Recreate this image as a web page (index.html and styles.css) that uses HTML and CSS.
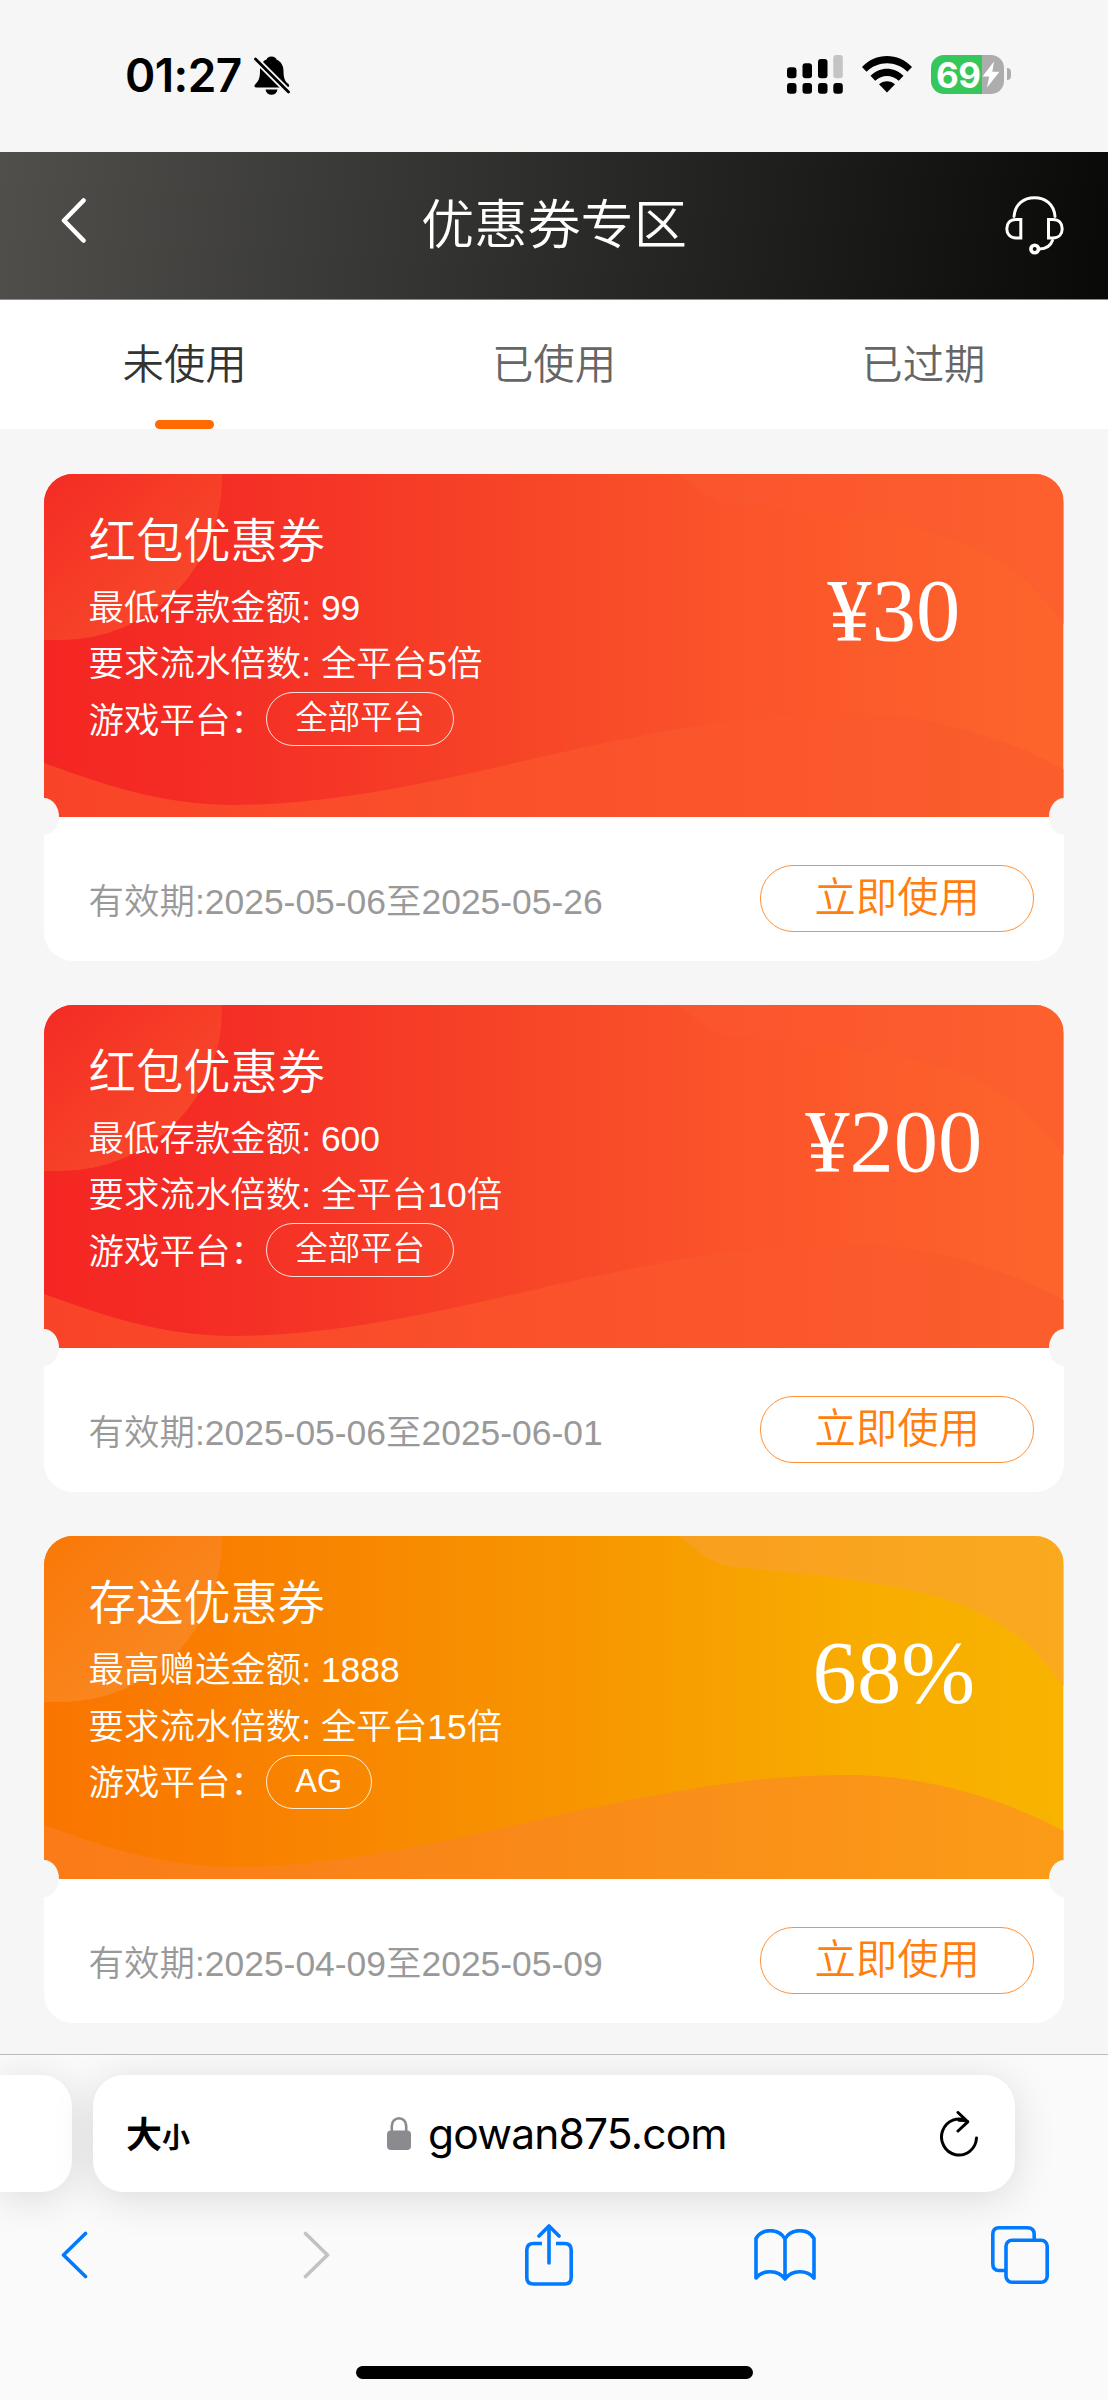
FILE: index.html
```html
<!DOCTYPE html>
<html lang="zh-CN">
<head>
<meta charset="utf-8">
<title>优惠券专区</title>
<link rel="stylesheet" href="styles.css">
</head>
<body>
<svg class="defs" width="0" height="0" aria-hidden="true">
  <defs>
    <linearGradient id="redBase"><stop offset="0" stop-color="#f42623"/><stop offset=".15" stop-color="#f42c25"/><stop offset=".5" stop-color="#f74728"/><stop offset=".68" stop-color="#fb542a"/><stop offset="1" stop-color="#fd652c"/></linearGradient>
    <linearGradient id="redWave"><stop offset="0" stop-color="#f94328"/><stop offset=".5" stop-color="#fa522b"/><stop offset="1" stop-color="#fb5e2c"/></linearGradient>
    <linearGradient id="redTop"><stop offset="0" stop-color="#fa542d"/><stop offset="1" stop-color="#fd602d"/></linearGradient>
    <linearGradient id="redOrb" x1="0" y1="0" x2="1" y2="1"><stop offset="0" stop-color="#f42b24"/><stop offset=".45" stop-color="#f63d27"/><stop offset=".8" stop-color="#f8492b"/></linearGradient>
    <linearGradient id="amberBase"><stop offset="0" stop-color="#fa7500"/><stop offset=".15" stop-color="#f97d00"/><stop offset=".5" stop-color="#f79400"/><stop offset=".8" stop-color="#f8ac00"/><stop offset="1" stop-color="#f8b400"/></linearGradient>
    <linearGradient id="amberWave"><stop offset="0" stop-color="#fa7b18"/><stop offset=".5" stop-color="#f98a18"/><stop offset="1" stop-color="#fb9c18"/></linearGradient>
    <linearGradient id="amberTop"><stop offset="0" stop-color="#f99f1f"/><stop offset="1" stop-color="#faaa1f"/></linearGradient>
    <linearGradient id="amberOrb" x1="0" y1="0" x2="1" y2="1"><stop offset="0" stop-color="#f97806"/><stop offset=".45" stop-color="#f98218"/><stop offset=".8" stop-color="#f98922"/></linearGradient>
    <path id="wave" d="M0 289C60 311 120 331 189 331C290 331 400 306 510 280C620 256 710 239 803 239C880 239 960 262 1020 295V343H0Z"/>
    <path id="crest" d="M635 0C655 16 668 27 684 30C724 35 770 37 814 45C850 50 880 56 910 66C960 84 988 107 1020 150V0Z"/>
    <path id="orb" d="M0 0H178A161 161 0 0 1 17 166H0Z"/>
  </defs>
</svg>

<header class="status">
  <span class="status-time">01:27</span>
  <svg class="status-bell" viewBox="0 0 36 39">
    <path d="M17.5 0.5C14.5 .5 13 2 12.6 3.4C7.400 5.400 6 10 6 15C6 23 4 25.500 1.500 28C0 29.500 0 31.400 2 31.400H33C35 31.400 36 29.500 34.400 28C31 25.500 29.500 22 29.500 15C29.500 9 26.500 5 22.500 3.400C22 2 20.500 .5 17.500 .5ZM11.500 33.500H23.500C23 37 20.500 38.700 17.500 38.700S12 37 11.500 33.500Z"/>
    <path d="M-1 0.500L34.500 36" stroke="#f6f6f6" stroke-width="6.500"/>
    <path d="M1.500 3L34.500 36" stroke="#000" stroke-width="2.800" stroke-linecap="round"/>
  </svg>
  <div class="status-right">
    <svg class="status-signal" viewBox="0 0 56 39">
      <rect x="0" y="12.300" width="9.500" height="11" rx="3"/><rect x="15.500" y="8.300" width="9.500" height="15" rx="3"/><rect x="31" y="4" width="9.500" height="19.300" rx="3"/><rect x="46.300" y="0" width="9.500" height="23.300" rx="3" fill="#c4c4c4"/>
      <rect x="0" y="28" width="9.500" height="10.800" rx="3"/><rect x="15.500" y="28" width="9.500" height="10.800" rx="3"/><rect x="31" y="28" width="9.500" height="10.800" rx="3"/><rect x="46.300" y="28" width="9.500" height="10.800" rx="3"/>
    </svg>
    <svg class="status-wifi" viewBox="0 0 50 37">
      <path d="M0 11C13.500-3.600 36.500-3.600 50 11L45.400 15.800C34.300 4.300 15.700 4.300 4.600 15.800Z"/>
      <path d="M8.500 19.800C18 10.300 32 10.300 41.500 19.800L36.800 24.700C30 18.300 20 18.300 13.200 24.700Z"/>
      <path d="M17 28.300C21.500 24.300 28.500 24.300 33 28.300L25 36.500Z"/>
    </svg>
    <div class="battery"><span class="battery-num">69</span>
      <svg class="battery-bolt" viewBox="0 0 18 27"><path d="M12 .5L.5 15.500H7.200L5 26.500L17.500 10.800H10.300Z"/></svg>
    </div>
    <span class="battery-nub"></span>
  </div>
</header>

<nav class="topbar">
  <svg class="topbar-back" viewBox="0 0 25 45"><path d="M22.500 2.500L3 22.500L22.500 42.500"/></svg>
  <h1 class="topbar-title">优惠券专区</h1>
  <svg class="topbar-help" viewBox="0 0 59 59">
    <path d="M9 20.500C10 8 19 1.800 29.500 1.800S49 8 50 20.500"/>
    <path d="M15.800 23.500V42H11C5 42 1.800 38 1.800 32.700S5 23.500 11 23.500ZM43.500 23.500V42H48C54 42 57.200 38 57.200 32.700S54 23.500 48 23.500Z"/>
    <path d="M47.500 44.500C45.500 50 41 52.800 34.500 53"/><circle cx="29.700" cy="53" r="3.800" stroke-width="3.600"/>
  </svg>
</nav>

<div class="tabs">
  <div class="tab tab-active">未使用</div>
  <div class="tab">已使用</div>
  <div class="tab">已过期</div>
</div>

<main class="list">
  <article class="coupon">
    <section class="coupon-face">
      <svg class="coupon-art" viewBox="0 0 1020 343" preserveAspectRatio="none"><rect width="1020" height="343" fill="url(#redBase)"/><use href="#orb" fill="url(#redOrb)"/><use href="#crest" fill="url(#redTop)"/><use href="#wave" fill="url(#redWave)"/></svg>
      <div class="coupon-info">
        <h2 class="coupon-name">红包优惠券</h2>
        <p class="coupon-line">最低存款金额: 99</p>
        <p class="coupon-line">要求流水倍数: 全平台5倍</p>
        <p class="coupon-line">游戏平台：<span class="chip">全部平台</span></p>
      </div>
      <div class="coupon-value">¥30</div>
    </section>
    <section class="coupon-foot"><span class="coupon-date">有效期:2025-05-06至2025-05-26</span><a class="use-btn">立即使用</a></section>
  </article>

  <article class="coupon">
    <section class="coupon-face">
      <svg class="coupon-art" viewBox="0 0 1020 343" preserveAspectRatio="none"><rect width="1020" height="343" fill="url(#redBase)"/><use href="#orb" fill="url(#redOrb)"/><use href="#crest" fill="url(#redTop)"/><use href="#wave" fill="url(#redWave)"/></svg>
      <div class="coupon-info">
        <h2 class="coupon-name">红包优惠券</h2>
        <p class="coupon-line">最低存款金额: 600</p>
        <p class="coupon-line">要求流水倍数: 全平台10倍</p>
        <p class="coupon-line">游戏平台：<span class="chip">全部平台</span></p>
      </div>
      <div class="coupon-value">¥200</div>
    </section>
    <section class="coupon-foot"><span class="coupon-date">有效期:2025-05-06至2025-06-01</span><a class="use-btn">立即使用</a></section>
  </article>

  <article class="coupon">
    <section class="coupon-face">
      <svg class="coupon-art" viewBox="0 0 1020 343" preserveAspectRatio="none"><rect width="1020" height="343" fill="url(#amberBase)"/><use href="#orb" fill="url(#amberOrb)"/><use href="#crest" fill="url(#amberTop)"/><use href="#wave" fill="url(#amberWave)"/></svg>
      <div class="coupon-info">
        <h2 class="coupon-name">存送优惠券</h2>
        <p class="coupon-line">最高赠送金额: 1888</p>
        <p class="coupon-line">要求流水倍数: 全平台15倍</p>
        <p class="coupon-line">游戏平台：<span class="chip">AG</span></p>
      </div>
      <div class="coupon-value">68%</div>
    </section>
    <section class="coupon-foot"><span class="coupon-date">有效期:2025-04-09至2025-05-09</span><a class="use-btn">立即使用</a></section>
  </article>
</main>

<footer class="browser">
  <div class="fields">
    <div class="field-prev"></div>
    <div class="field">
      <span class="field-size">大<small>小</small></span>
      <span class="field-url">
        <svg class="field-lock" viewBox="0 0 24 33"><rect x="0" y="13.500" width="24" height="19.500" rx="4"/><path d="M4.800 15V9C4.800 4.500 8 1.300 12 1.300S19.200 4.500 19.200 9V15" fill="none" stroke="#8a8a8f" stroke-width="2.600"/></svg>
        <span class="field-host">gowan875.com</span>
      </span>
      <svg class="field-reload" viewBox="0 0 38 46"><path d="M27.500 10.300A17.500 18 0 1 0 36.500 27M18 1.500L27.800 10.800L18 20M27.500 10.300C25 9.400 22 9.300 19 9.300" /></svg>
    </div>
  </div>
  <div class="toolbar">
    <svg class="tool-back" viewBox="0 0 27 48"><path d="M24.500 2.500L2.500 24L24.500 45.500"/></svg>
    <svg class="tool-forward" viewBox="0 0 27 48"><path d="M2.500 2.500L24.500 24L2.500 45.500"/></svg>
    <svg class="tool-share" viewBox="0 0 48 62"><path d="M17 19.500H8.500Q1.800 19.500 1.800 26V53.500Q1.800 60 8.500 60H39.500Q46.200 60 46.200 53.500V26Q46.200 19.500 39.500 19.500H31"/><path d="M24 39V2.500M14 12L24 2L34 12" stroke-linecap="round"/></svg>
    <svg class="tool-book" viewBox="0 0 62 52"><path d="M31 10C25 -1 8-1 2 9.500V49C9 40.500 24 40.500 31 50C38 40.500 53 40.500 60 49V9.500C54-1 37-1 31 10ZM31 10V50"/></svg>
    <svg class="tool-tabs" viewBox="0 0 58 58"><path d="M14 44.500H8Q1.800 44.500 1.800 38V8.500Q1.800 1.800 8 1.800H36.500Q43.200 1.800 43.200 8.500V13"/><rect x="15" y="14.200" width="41.200" height="42" rx="6"/></svg>
  </div>
  <div class="home"></div>
</footer>
</body>
</html>
```
FILE: styles.css
```css
* { box-sizing: border-box; }
body {
  margin: 0;
  width: 1108px;
  height: 2400px;
  overflow: hidden;
  background: #f6f6f6;
  display: flex;
  flex-direction: column;
  font-family: "Liberation Sans", "Noto Sans CJK SC", sans-serif;
  font-weight: 350;
}
h1, h2, p { margin: 0; font-weight: inherit; }
svg { display: block; flex: none; }
.defs { position: absolute; }

/* phone status line */
.status { height: 152px; flex: none; display: flex; align-items: flex-start; padding: 55px 97px 0 125px; }
.status-time { width: 129px; font: 600 46px/41px Inter, sans-serif; letter-spacing: -0.6px; white-space: nowrap; }
.status-bell { width: 36px; height: 39px; margin-top: 1px; }
.status-right { margin-left: auto; display: flex; align-items: flex-start; }
.status-signal { width: 56px; height: 39px; margin-right: 19px; }
.status-wifi { width: 50px; height: 37px; margin-top: 1px; margin-right: 19px; }
.battery { width: 73px; height: 39px; border-radius: 13px; display: flex; align-items: center; padding-left: 5px; background: linear-gradient(90deg, #35c759 51px, #adadad 51px); }
.battery-num { width: 46px; font: 700 35px/38px Inter, sans-serif; letter-spacing: -0.5px; color: #fff; }
.battery-bolt { width: 18px; height: 27px; fill: #fff; }
.battery-nub { width: 4px; height: 12px; margin: 13px 0 0 3px; border-radius: 0 4px 4px 0; background: #adadad; }

/* page title bar */
.topbar { height: 147px; flex: none; display: grid; grid-template-columns: 59px 1fr 59px; align-items: start; padding: 44px 44px 0; color: #fff; background: linear-gradient(98deg, #504f4c 0%, #2c2c2a 50%, #090907 100%); }
.topbar-back { width: 25px; height: 45px; margin: 2px 0 0 17px; fill: none; stroke: #fff; stroke-width: 4.6; stroke-linecap: round; stroke-linejoin: round; }
.topbar-title { padding-top: 3px; font-size: 53.2px; line-height: 53px; text-align: center; }
.topbar-help { width: 59px; height: 59px; fill: none; stroke: #fff; stroke-width: 3; stroke-linecap: round; }

.tabs { height: 130px; flex: none; display: grid; grid-template-columns: repeat(3, 1fr); background: #fff; border-top: 1px solid #8e8c8c; }
.tab { display: flex; flex-direction: column; align-items: center; padding-top: 38px; font-size: 41.4px; line-height: 54px; color: #666; }
.tab-active { color: #333; }
.tab-active::after { content: ""; width: 59px; height: 9px; margin-top: 28px; border-radius: 4.5px; background: #ff6b00; }

/* coupon cards */
.list { flex: 1; padding: 45px 44.3px 0; display: flex; flex-direction: column; gap: 44.2px; }
.coupon { position: relative; height: 487px; flex: none; border-radius: 29px; overflow: hidden; background: #fff; }
.coupon::before, .coupon::after { content: ""; position: absolute; top: 324px; width: 30px; height: 37px; border-radius: 50%; background: #f6f6f6; }
.coupon::before { left: -15px; }
.coupon::after { right: -15px; }
.coupon-face { height: 343px; display: grid; grid-template-columns: 2fr 1fr; color: #fff; }
.coupon-face > * { grid-row: 1; min-width: 0; }
.coupon-art { grid-column: 1 / 3; width: 100%; height: 343px; }
.coupon-info { grid-column: 1; padding: 39px 0 0 44.3px; }
.coupon-name { font-size: 47.3px; line-height: 57px; margin-bottom: 10px; }
.coupon-line { height: 56.500px; display: flex; align-items: center; font-size: 35.45px; line-height: 57px; white-space: nowrap; }
.chip { height: 54px; margin-top: -4px; padding: 0 28.5px; border: 1.5px solid rgba(255, 255, 255, .85); border-radius: 27px; font-size: 32.4px; line-height: 51px; }
.coupon-value { grid-column: 2; padding-top: 86px; text-align: center; font-family: "Liberation Serif", serif; font-weight: 400; font-size: 88.6px; line-height: 100px; }
.coupon-foot { height: 144px; display: flex; align-items: center; justify-content: space-between; padding: 18px 29.5px 0 44.3px; }
.coupon-date { font-size: 35.45px; color: #999; }
.use-btn { width: 274px; height: 67px; border: 1.5px solid #ff9238; border-radius: 33px; color: #ff7e0e; font-size: 41.4px; line-height: 64px; text-align: center; }

/* browser controls */
.browser { height: 346px; flex: none; background: #fafafa; border-top: 1px solid #bdbdbd; overflow: hidden; }
.fields { display: flex; gap: 21px; padding-top: 20px; }
.field-prev, .field { height: 117px; background: #fff; box-shadow: 0 6px 42px rgba(0, 0, 0, .13); }
.field-prev { width: 72px; border-radius: 0 31px 31px 0; }
.field { width: 922px; border-radius: 31px; display: flex; align-items: center; padding: 0 37px 0 33px; }
.field-size { width: 261px; display: flex; align-items: baseline; font: 700 36px/50px "Noto Sans CJK SC", sans-serif; }
.field-size small { font-size: 28px; }
.field-url { display: flex; align-items: center; gap: 17px; }
.field-lock { width: 24px; height: 33px; fill: #8a8a8f; }
.field-host { font: 400 42.5px/50px Inter, sans-serif; letter-spacing: -0.8px; }
.field-reload { width: 38px; height: 46px; margin-left: auto; fill: none; stroke: #000; stroke-width: 3; stroke-linecap: round; stroke-linejoin: round; }
.toolbar { height: 62px; margin-top: 32px; padding: 0 59px 0 61px; display: flex; align-items: center; fill: none; stroke: #007aff; stroke-width: 3.6; stroke-linejoin: round; }
.tool-back { width: 27px; height: 48px; stroke-linecap: round; }
.tool-forward { width: 27px; height: 48px; margin-left: 215px; stroke: #c2c2c2; stroke-linecap: round; }
.tool-share { width: 48px; height: 62px; margin-left: 195px; }
.tool-book { width: 62px; height: 52px; margin-left: 181px; }
.tool-tabs { width: 58px; height: 58px; margin-left: auto; }
.home { width: 397px; height: 13px; margin: 80px auto 0; border-radius: 7px; background: #000; }
```
